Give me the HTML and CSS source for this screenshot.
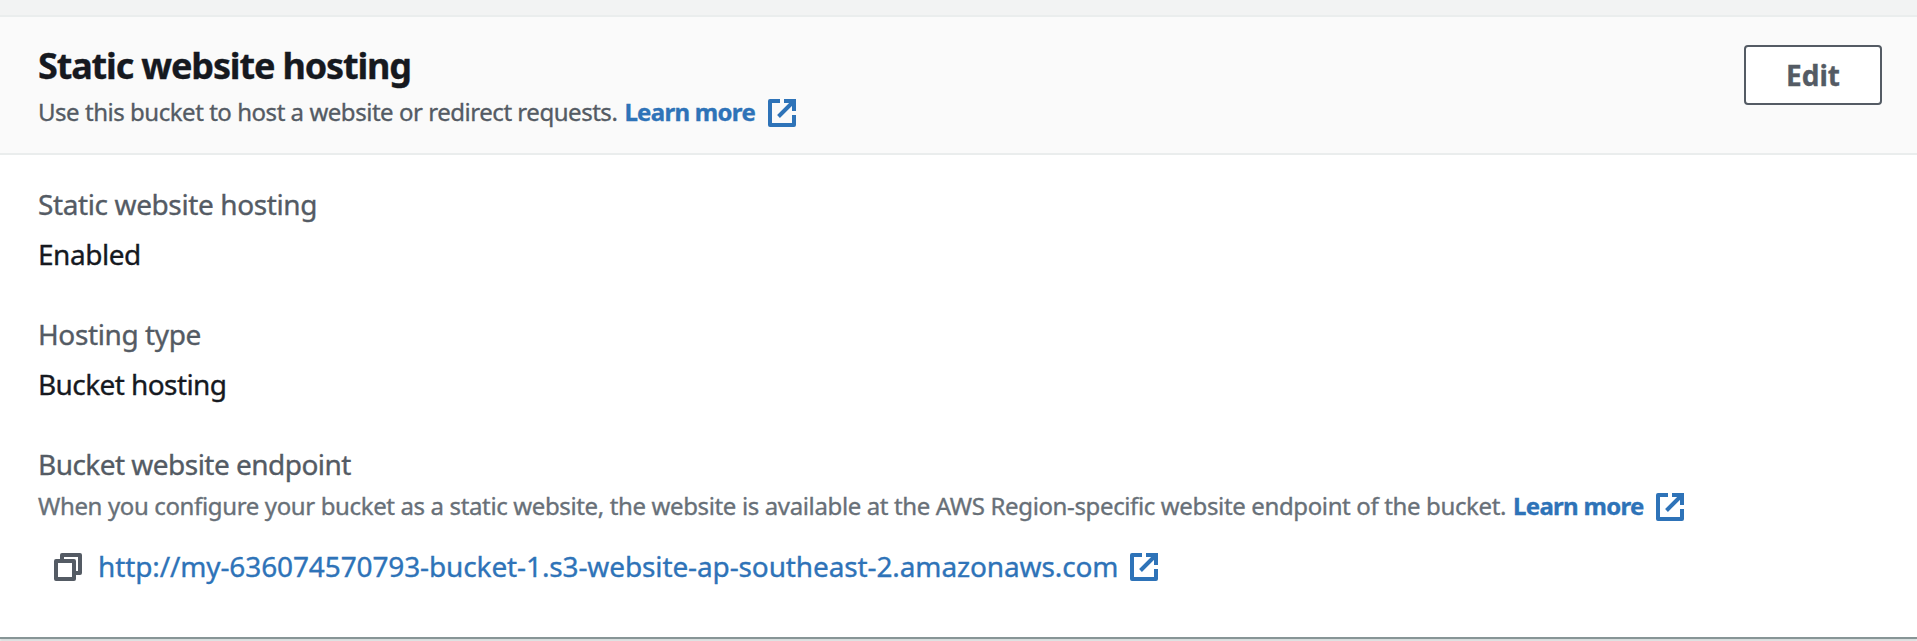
FILE: index.html
```html
<!DOCTYPE html>
<html lang="en">
<head>
<meta charset="utf-8">
<title>Static website hosting</title>
<link rel="stylesheet" href="styles.css">
</head>
<body>
<svg class="defs" aria-hidden="true">
  <symbol id="external" viewBox="0 0 28 28">
    <path d="M12 2H2v24h24V16" fill="none" stroke="currentColor" stroke-width="4" stroke-linejoin="round"/>
    <path d="M16 2h10v10M26 2 10.500 17.500" fill="none" stroke="currentColor" stroke-width="4"/>
  </symbol>
  <symbol id="copy" viewBox="0 0 28 28">
    <path d="M2 8h18v18H2zM8 8V2h18v18h-6" fill="none" stroke="currentColor" stroke-width="4" stroke-linejoin="round"/>
  </symbol>
</svg>
<section class="panel">
  <header class="panel-header">
    <div class="heading">
      <h2 class="title">Static website hosting</h2>
      <p class="description"><span class="intro">Use this bucket to host a website or redirect requests.</span><a class="learn"><span>Learn more</span><svg class="icon"><use href="#external"/></svg></a></p>
    </div>
    <button class="edit">Edit</button>
  </header>
  <div class="panel-body">
    <div class="field">
      <div class="label">Static website hosting</div>
      <div class="value">Enabled</div>
    </div>
    <div class="field">
      <div class="label">Hosting type</div>
      <div class="value hosting">Bucket hosting</div>
    </div>
    <div class="field endpoint">
      <div class="label">Bucket website endpoint</div>
      <p class="hint"><span class="hint-text">When you configure your bucket as a static website, the website is available at the AWS Region-specific website endpoint of the bucket.</span><a class="learn"><span>Learn more</span><svg class="icon"><use href="#external"/></svg></a></p>
      <div class="url-row"><svg class="icon copy"><use href="#copy"/></svg><a class="url">http://my-636074570793-bucket-1.s3-website-ap-southeast-2.amazonaws.com</a><svg class="icon open"><use href="#external"/></svg></div>
    </div>
  </div>
</section>
</body>
</html>
```
FILE: styles.css
```css
* { box-sizing: border-box; }
body {
  margin: 0;
  height: 641px;
  padding-top: 15px;
  overflow: hidden;
  background: #f2f3f3;
  font-family: "Noto Sans", "Open Sans", sans-serif;
  font-size: 28px;
  line-height: 40px;
  color: #16191f;
  -webkit-text-stroke: 0.35px currentColor;
}
h2, p { margin: 0; }
.defs { display: none; }
.panel {
  height: 624px;
  background: #fff;
  border-top: 2px solid #eaeded;
  border-bottom: 2px solid #879596;
  box-shadow: 0 2px 2px #d5dbdb;
}
.panel-header {
  display: flex;
  justify-content: space-between;
  align-items: flex-start;
  height: 138px;
  padding: 26px 35px 0 38px;
  background: #fafafa;
  border-bottom: 2px solid #eaeded;
}
.title { font-size: 36px; line-height: 46px; font-weight: 700; letter-spacing: -1.15px; white-space: nowrap; }
.description, .hint { display: flex; align-items: center; font-size: 24px; white-space: nowrap; }
.description { line-height: 46px; color: #545b64; letter-spacing: -0.465px; }
.hint { line-height: 44px; color: #687078; letter-spacing: -0.365px; }
.learn { display: flex; align-items: center; margin-left: 7px; font-weight: 700; letter-spacing: -0.7px; color: #2e73b8; }
.icon { display: block; flex: none; width: 28px; height: 28px; margin-top: 2px; }
.learn .icon { margin-left: 12.500px; }
.edit {
  width: 138px;
  height: 60px;
  margin-top: 2px;
  padding: 0;
  border: 2px solid #545b64;
  border-radius: 4px;
  background: #fff;
  color: #545b64;
  font: 700 28px/56px "Noto Sans", sans-serif;
}
.panel-body { display: flex; flex-direction: column; gap: 40px; padding: 29px 38px 0; }
.field { display: flex; flex-direction: column; gap: 10px; white-space: nowrap; }
.endpoint { gap: 0; }
.label { color: #545b64; letter-spacing: -0.39px; }
.endpoint .label { letter-spacing: -0.53px; }
.value { letter-spacing: -0.45px; }
.hosting { letter-spacing: -0.58px; }
.url-row { display: flex; align-items: center; margin-top: 18px; padding-left: 16px; }
.copy { color: #545b64; }
.url { margin-left: 16px; color: #2e73b8; letter-spacing: -0.12px; }
.open { margin-left: 12px; color: #2e73b8; }
```
